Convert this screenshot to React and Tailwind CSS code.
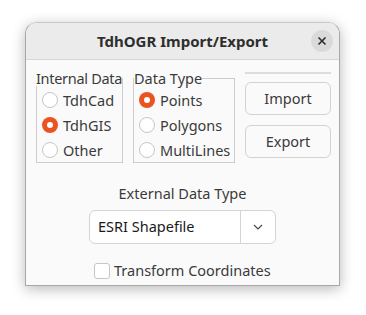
import React from "react";

function Radio({ checked, label }) {
  return (
    <div className="flex items-center h-[25px] whitespace-nowrap">
      {checked ? (
        <div className="w-[16px] h-[16px] rounded-full bg-[#e95420] flex items-center justify-center shrink-0">
          <div className="w-[6px] h-[6px] rounded-full bg-white" />
        </div>
      ) : (
        <div className="w-[16px] h-[16px] rounded-full bg-white border border-[#c6c6c6] shrink-0" />
      )}
      <span className="ml-[5px] text-[#3a3a3a]">{label}</span>
    </div>
  );
}

export default function App() {
  return (
    <div
      className="w-[366px] h-[315px] bg-white pt-[22px] pl-[25px]"
      style={{ fontFamily: '"Noto Sans", "DejaVu Sans", sans-serif' }}
    >
      <div className="w-[315px] h-[264px] rounded-t-[12px] border border-[#a8a8a8] border-t-[#c8c8c8] bg-[#fafafa] shadow-[0_3px_14px_rgba(0,0,0,0.28)] flex flex-col overflow-hidden">
        <div className="relative h-[37px] bg-[#ebebeb] border-b border-[#d6d6d6] flex items-center justify-center shrink-0">
          <span className="font-bold text-[15px] text-[#2e2e2e]">TdhOGR Import/Export</span>
          <div className="absolute right-[6px] top-[7px] w-[22px] h-[22px] rounded-full bg-[#dadada] flex items-center justify-center">
            <svg width="10" height="10" viewBox="0 0 10 10">
              <path d="M1.5 1.5 L8.5 8.5 M8.5 1.5 L1.5 8.5" stroke="#2e2e2e" strokeWidth="1.6" />
            </svg>
          </div>
        </div>
        <div className="flex flex-col text-[14.5px] leading-none">
          <div className="flex pl-[10px] pt-[11px]">
            <fieldset className="w-[87px] h-[92px] border border-[#cdcdcd] pl-[5px] pr-0 pb-0 pt-0 m-0 min-w-0">
              <legend className="px-0 -ml-[6px] text-[#3a3a3a] whitespace-nowrap tracking-[-0.3px]">Internal Data</legend>
              <div className="mt-[2px]">
                <Radio label="TdhCad" />
                <Radio label="TdhGIS" checked />
                <Radio label="Other" />
              </div>
            </fieldset>
            <fieldset className="ml-[10px] w-[102px] h-[92px] border border-[#cdcdcd] pl-[5px] pr-0 pb-0 pt-0 m-0 min-w-0">
              <legend className="px-0 -ml-[5px] text-[#3a3a3a] whitespace-nowrap">Data Type</legend>
              <div className="mt-[2px]">
                <Radio label="Points" checked />
                <Radio label="Polygons" />
                <Radio label="MultiLines" />
              </div>
            </fieldset>
            <div className="ml-[10px] w-[86px] flex flex-col -mt-[4px]">
              <div className="h-[2px] bg-[#dcdcdc] mt-[5px]" />
              <div className="mt-[8px] h-[33px] border border-[#d2d2d2] rounded-[6px] bg-[#fafafa] flex items-center justify-center text-[#3a3a3a]">
                Import
              </div>
              <div className="mt-[10px] h-[33px] border border-[#d2d2d2] rounded-[6px] bg-[#fafafa] flex items-center justify-center text-[#3a3a3a]">
                Export
              </div>
            </div>
          </div>
          <div className="flex flex-col items-center mt-[23px]">
            <span className="text-[#3a3a3a]">External Data Type</span>
          </div>
          <div className="ml-[63px] mt-[9px] w-[187px] h-[34px] bg-white border border-[#d4d4d4] rounded-[6px] flex">
            <div className="flex-1 flex items-center pl-[8px] text-[#1a1a1a]">ESRI Shapefile</div>
            <div className="w-[35px] border-l border-[#d4d4d4] flex items-center justify-center">
              <svg width="10" height="6" viewBox="0 0 10 6">
                <path d="M1 1 L5 5 L9 1" stroke="#444" strokeWidth="1.1" fill="none" />
              </svg>
            </div>
          </div>
          <div className="ml-[68px] mt-[19px] flex items-center">
            <div className="w-[16px] h-[16px] bg-white border border-[#c6c6c6] rounded-[3px]" />
            <span className="ml-[4px] text-[#3a3a3a]">Transform Coordinates</span>
          </div>
        </div>
      </div>
    </div>
  );
}
